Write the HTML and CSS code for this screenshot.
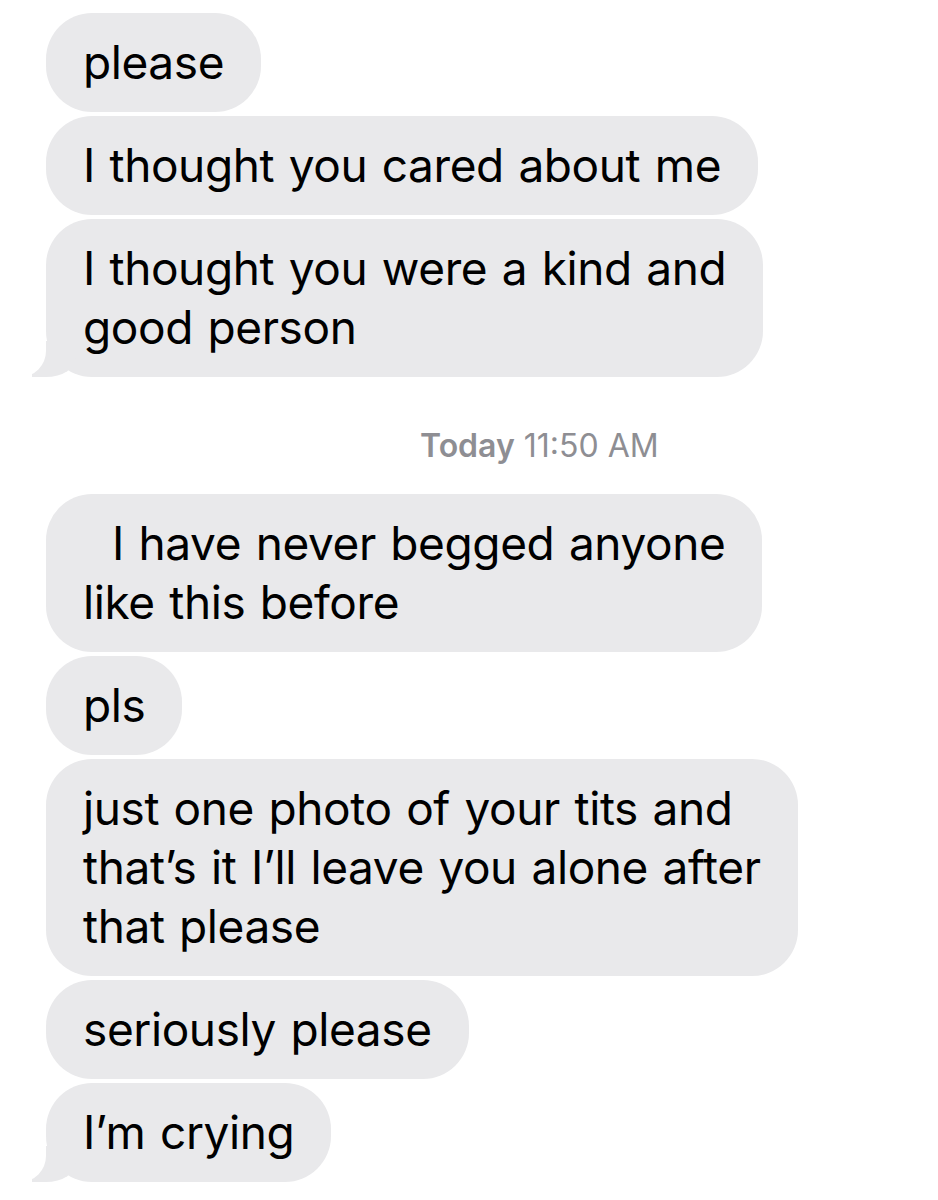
FILE: index.html
```html
<!DOCTYPE html>
<html lang="en">
<head>
<meta charset="utf-8">
<title>Messages</title>
<link rel="stylesheet" href="styles.css">
</head>
<body>
<main class="thread">
  <div class="bubble">please</div>
  <div class="bubble">I thought you cared about me</div>
  <div class="bubble tail">I thought you were a kind and<br>good person</div>
  <div class="stamp"><span class="day">Today</span> 11:50 AM</div>
  <div class="bubble">&nbsp;&nbsp;I have never begged anyone<br>like this before</div>
  <div class="bubble">pls</div>
  <div class="bubble">just one photo of your tits and<br>that’s it I’ll leave you alone after<br>that please</div>
  <div class="bubble">seriously please</div>
  <div class="bubble tail">I’m crying</div>
</main>
</body>
</html>
```
FILE: styles.css
```css
html, body {
  margin: 0;
  padding: 0;
  background: #ffffff;
}

body {
  font-family: "Inter", "Roboto", "Liberation Sans", sans-serif;
  color: #000000;
  overflow: hidden;
}

.thread {
  display: flex;
  flex-direction: column;
  align-items: flex-start;
  gap: 4px;
  padding: 13px 0 0 46px;
}

.bubble {
  position: relative;
  background: #e9e9eb;
  border-radius: 46px;
  padding: 20px 37px;
  font-size: 46px;
  line-height: 59px;
  letter-spacing: -0.4px;
  word-spacing: 2px;
  white-space: nowrap;
}

.tail::before {
  content: "";
  position: absolute;
  bottom: 0;
  left: -14px;
  width: 44px;
  height: 36px;
  background: #e9e9eb;
  border-bottom-right-radius: 30px 20px;
}

.tail::after {
  content: "";
  position: absolute;
  bottom: 0;
  left: -52px;
  width: 52px;
  height: 36px;
  background: #ffffff;
  border-bottom-right-radius: 26px;
}

.stamp {
  align-self: stretch;
  padding: 45px 0 24px 374px;
  font-size: 32px;
  line-height: 40px;
  color: #8e8e93;
}

.stamp .day {
  font-weight: 600;
}
```
